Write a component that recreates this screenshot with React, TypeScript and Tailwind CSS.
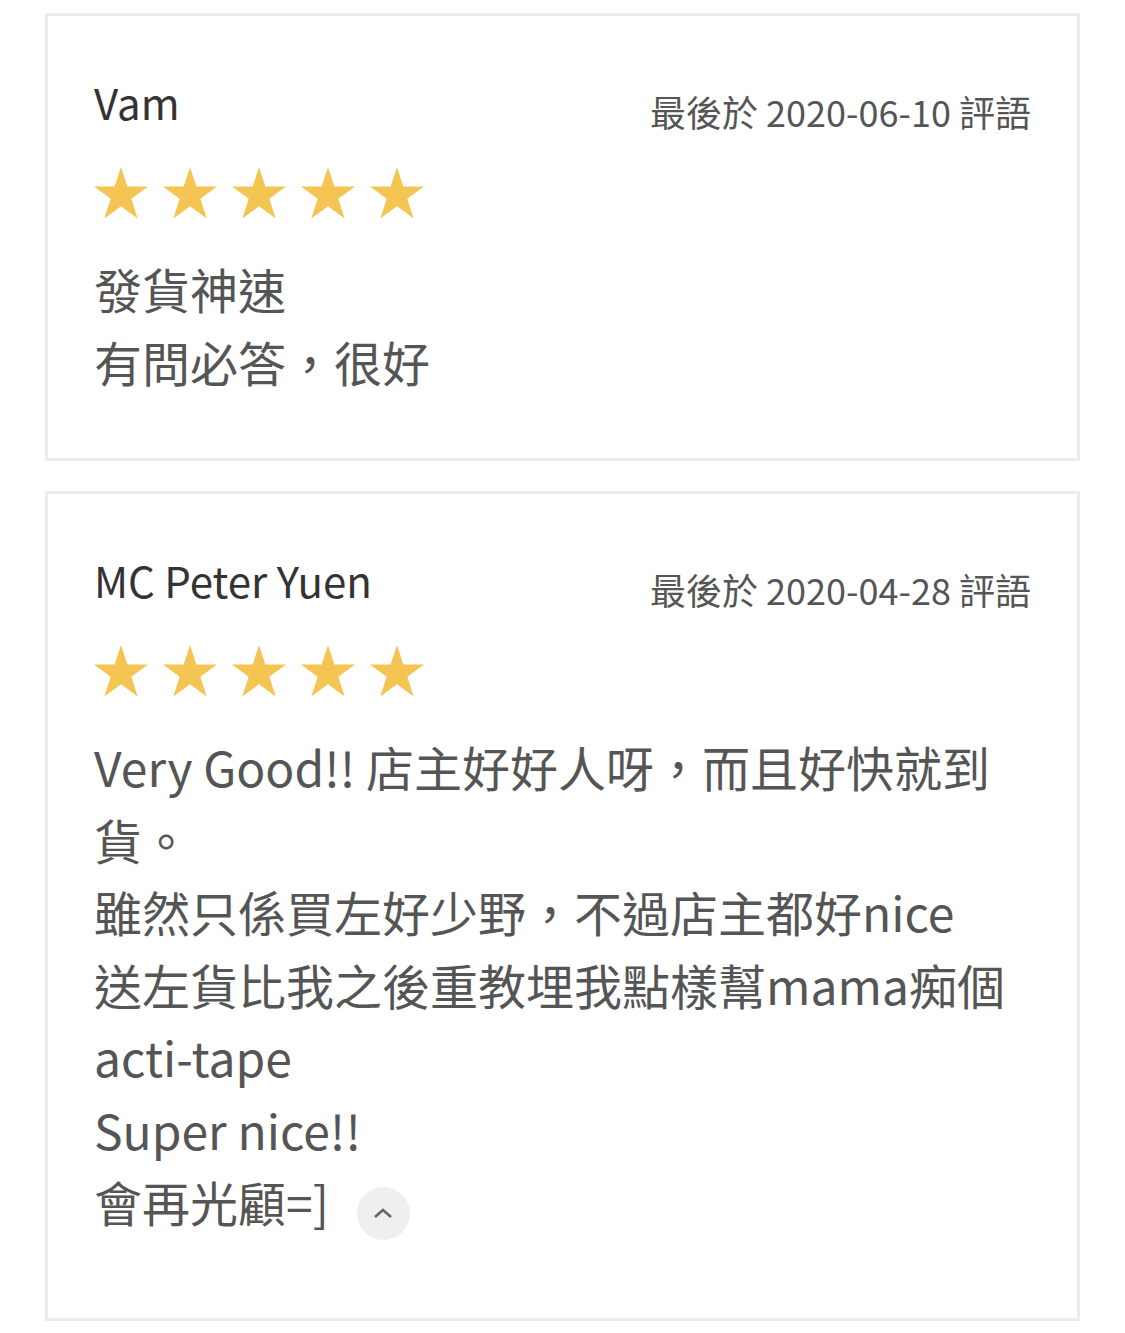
import React from "react";

type Review = {
  name: string;
  date: string;
  lines: string[];
  collapsible?: boolean;
};

const reviews: Review[] = [
  {
    name: "Vam",
    date: "2020-06-10",
    lines: ["發貨神速", "有問必答，很好"],
  },
  {
    name: "MC Peter Yuen",
    date: "2020-04-28",
    lines: [
      "Very Good!! 店主好好人呀，而且好快就到",
      "貨。",
      "雖然只係買左好少野，不過店主都好nice",
      "送左貨比我之後重教埋我點樣幫mama痴個",
      "acti-tape",
      "Super nice!!",
      "會再光顧=]",
    ],
    collapsible: true,
  },
];

function Star() {
  return (
    <svg width="54" height="52" viewBox="0 0 54 52" aria-hidden>
      <polygon
        fill="#F4C553"
        points="27,0 33.38,19.62 54,19.62 37.32,31.75 43.69,51.4 27,39.25 10.31,51.4 16.68,31.75 0,19.62 20.62,19.62"
      />
    </svg>
  );
}

function ReviewCard({ review }: { review: Review }) {
  return (
    <div
      className={
        review.collapsible
          ? "border-[3px] border-[#ededed] bg-white px-[46px] pt-[58px] pb-[80px]"
          : "border-[3px] border-[#ededed] bg-white px-[46px] pt-[58px] pb-[61px]"
      }
    >
      {/* Header */}
      <div className="flex items-end justify-between">
        <div className="text-[42px] leading-[56px] text-[#333]">{review.name}</div>
        <div className="text-[36px] leading-[50px] text-[#555] mb-[-6px]">
          最後於 {review.date} 評語
        </div>
      </div>

      {/* Stars */}
      <div className="flex gap-[15px] mt-[37px]">
        {[0, 1, 2, 3, 4].map((i) => (
          <Star key={i} />
        ))}
      </div>

      {/* Body */}
      <div className="mt-[33px] text-[48px] leading-[72.5px] text-[#555] whitespace-nowrap">
        {review.lines.map((line, i) => {
          const last = i === review.lines.length - 1;
          return (
            <div key={i} className="flex items-center">
              <span>{line}</span>
              {last && review.collapsible && (
                <button className="ml-[28px] translate-y-[12px] w-[53px] h-[53px] rounded-full bg-[#efefef] flex items-center justify-center">
                  <svg width="22" height="14" viewBox="0 0 22 14" aria-hidden>
                    <path d="M3 11 L11 4 L19 11" fill="none" stroke="#666" strokeWidth="2.6" />
                  </svg>
                </button>
              )}
            </div>
          );
        })}
      </div>
    </div>
  );
}

export default function App() {
  return (
    <div
      className="bg-white min-h-[1333px] px-[45px] pt-[13px] flex flex-col gap-[30px]"
      style={{ fontFamily: '"Noto Sans CJK TC", "Noto Sans", sans-serif' }}
    >
      {reviews.map((r) => (
        <ReviewCard key={r.name} review={r} />
      ))}
    </div>
  );
}
